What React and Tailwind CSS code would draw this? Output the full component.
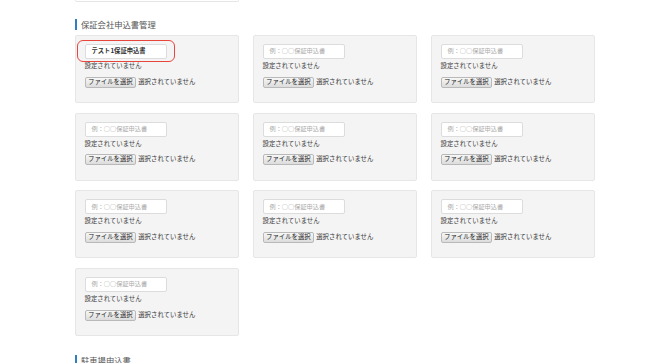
const font = { fontFamily: '"Noto Sans CJK JP", "Noto Sans", sans-serif' };

const SectionTitle = ({ children }) => (
  <div className="flex items-center h-[12px]">
    <span className="w-[2px] h-[11px] bg-[#2f7fc1]" />
    <span className="ml-[4px] text-[8.3px] leading-[12px] text-[#555]">{children}</span>
  </div>
);

const DocCard = ({ value, highlight }) => (
  <div className="w-[164px] h-[68px] bg-[#f4f4f4] border border-[#e6e6e6] rounded-[2px] pt-[8px] pl-[8.5px]">
    <div className="relative w-[82px] h-[15px]">
      <div className="w-full h-full bg-white border border-[#dcdcdc] rounded-[2px] flex items-center pl-[6px]">
        {value ? (
          <span className="text-[6.3px] font-bold text-[#333] leading-none whitespace-nowrap">{value}</span>
        ) : (
          <span className="text-[6.2px] text-[#aaa] leading-none whitespace-nowrap">例：○○保証申込書</span>
        )}
      </div>
      {highlight && (
        <div className="absolute left-[-8px] right-[-8.5px] top-[-4px] bottom-[-3px] border-[1.6px] border-[#e8453c] rounded-[6px]" />
      )}
    </div>
    <div className="mt-[3px] h-[8px] text-[6.4px] leading-[8px] text-[#3a3a3a] whitespace-nowrap">設定されていません</div>
    <div className="mt-[6.5px] flex items-center h-[11px]">
      <span className="h-[11px] px-[2.5px] flex items-center border border-[#b9b9b9] rounded-[2px] bg-gradient-to-b from-[#f7f7f7] to-[#dcdcdc] text-[6.4px] text-[#222] leading-none whitespace-nowrap">
        ファイルを選択
      </span>
      <span className="ml-[2px] text-[6.4px] text-[#333] leading-none whitespace-nowrap">選択されていません</span>
    </div>
  </div>
);

export default function App() {
  const cards = [
    { value: 'テスト1保証申込書', highlight: true },
    {}, {}, {}, {}, {}, {}, {}, {}, {},
  ];
  return (
    <div className="w-[670px] h-[363px] overflow-hidden bg-white" style={font}>
      <div className="pl-[75px]">
        <div className="w-[164px] h-[2px] border-b border-l border-r border-[#e6e6e6] rounded-b-[2px]" />
        <div className="mt-[16px]">
          <SectionTitle>保証会社申込書管理</SectionTitle>
        </div>
        <div className="mt-[5px] grid grid-cols-[164px_164px_164px] gap-x-[14px] gap-y-[9.7px]">
          {cards.map((c, i) => (
            <DocCard key={i} value={c.value} highlight={c.highlight} />
          ))}
        </div>
        <div className="mt-[18px]">
          <SectionTitle>駐車場申込書</SectionTitle>
        </div>
      </div>
    </div>
  );
}
